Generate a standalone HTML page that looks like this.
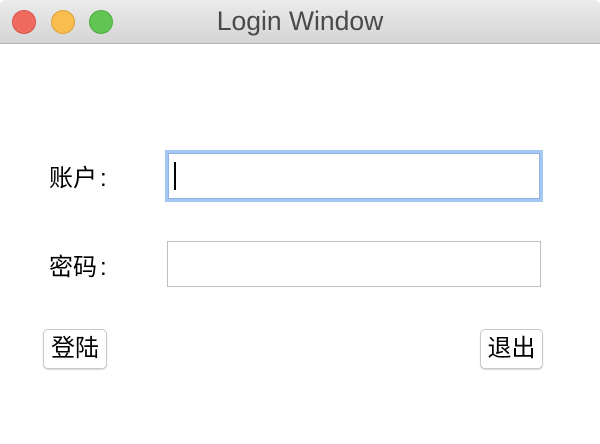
<!DOCTYPE html>
<html><head><meta charset="utf-8"><style>
*{margin:0;padding:0;box-sizing:border-box}
body{width:600px;height:444px;background:#fff;position:relative;overflow:hidden;font-family:"Liberation Sans","Noto Sans CJK SC",sans-serif}
.tb{position:absolute;left:0;top:0;width:600px;height:44px;background:linear-gradient(#ebebeb,#d5d5d5);border-bottom:1px solid #b0b0b0;border-radius:6px 6px 0 0}
.d{position:absolute;top:10px;width:24px;height:24px;border-radius:50%}
.t{position:absolute;left:0;width:600px;top:6px;text-align:center;font-size:26.5px;color:#4a4a4a}
.l{position:absolute;font-size:24px;color:#000;left:49px}
.l span{margin-left:3px}
.f{position:absolute;border:1px solid #c0c0c0;background:#fff}
.b{position:absolute;border:1px solid #c8c8c8;border-radius:5px;background:#fff;font-size:24px;text-align:center;line-height:38px;box-shadow:0 1px 1px rgba(0,0,0,.15)}
</style></head><body>
<div class="tb">
<div class="d" style="left:12px;background:#ef6b60;border:1px solid #d9534b"></div>
<div class="d" style="left:51px;background:#f7be4f;border:1px solid #dea235"></div>
<div class="d" style="left:89px;background:#61c554;border:1px solid #4fab42"></div>
<div class="t">Login Window</div>
</div>
<div class="l" style="top:158px">账户<span>:</span></div>
<div class="l" style="top:247px">密码<span>:</span></div>
<div class="f" style="left:165px;top:150px;width:378px;height:52px;border:3px solid #a5c8f2"><div style="position:absolute;inset:0;border:1px solid #8fb2e0"></div><div style="position:absolute;left:6px;top:9px;width:2px;height:28px;background:#000"></div></div>
<div class="f" style="left:167px;top:241px;width:374px;height:46px"></div>
<div class="b" style="left:43px;top:329px;width:64px;height:40px">登陆</div>
<div class="b" style="left:480px;top:329px;width:63px;height:40px">退出</div>
</body></html>
